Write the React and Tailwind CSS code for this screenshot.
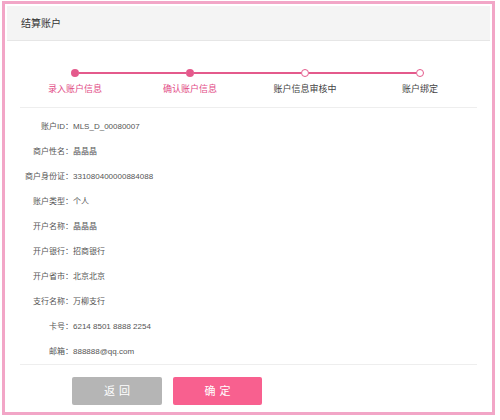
import React from "react";

const steps = [
  { label: "录入账户信息", done: true },
  { label: "确认账户信息", done: true },
  { label: "账户信息审核中", done: false },
  { label: "账户绑定", done: false },
];

const rows = [
  ["账户ID：", "MLS_D_00080007"],
  ["商户性名：", "晶晶晶"],
  ["商户身份证：", "331080400000884088"],
  ["账户类型：", "个人"],
  ["开户名称：", "晶晶晶"],
  ["开户银行：", "招商银行"],
  ["开户省市：", "北京北京"],
  ["支行名称：", "万柳支行"],
  ["卡号：", "6214 8501 8888 2254"],
  ["邮箱：", "888888@qq.com"],
];

function Dot({ done }) {
  return done ? (
    <div className="w-[8px] h-[8px] rounded-full bg-[#e45a8c] shrink-0" />
  ) : (
    <div className="w-[8px] h-[8px] rounded-full bg-white border-[1.5px] border-[#e45a8c] shrink-0" />
  );
}

export default function App() {
  return (
    <div className="w-[500px] h-[420px] bg-white pt-[1px] pl-[2px] font-['Liberation_Sans','Noto_Sans_CJK_SC',sans-serif]">
      <div className="w-[493px] h-[414px] border-[3px] border-[#f2a6c7] p-[2px] flex flex-col">
        <div className="h-[35px] bg-[#f4f4f4] border-b border-[#e6e6e6] flex items-center pl-[14px] text-[10px] text-[#333]">
          结算账户
        </div>

        <div className="pt-[28px] pl-[64px] flex items-center">
          {steps.map((s, i) => (
            <React.Fragment key={i}>
              <Dot done={s.done} />
              {i < steps.length - 1 && <div className="w-[107px] h-[2px] bg-[#e45a8c]" />}
            </React.Fragment>
          ))}
        </div>
        <div className="mt-[6px] ml-[10.5px] grid grid-cols-[115px_115px_115px_115px]">
          {steps.map((s, i) => (
            <div
              key={i}
              className={`text-center text-[9px] leading-[12px] ${i < 2 ? "text-[#e24a85]" : "text-[#444]"}`}
            >
              {s.label}
            </div>
          ))}
        </div>

        <div className="mt-[12px] mx-[13px] h-px bg-[#eeeeee]" />

        <div className="pt-[6px] pl-[13px] flex flex-col">
          {rows.map(([k, v], i) => (
            <div key={i} className="h-[25px] flex items-center text-[8px] text-[#555]">
              <div className="w-[53px] text-right">{k}</div>
              <div>{v}</div>
            </div>
          ))}
        </div>

        <div className="mx-[13px] h-px bg-[#eeeeee]" />

        <div className="mt-[12px] pl-[65px] flex gap-[11px]">
          <button className="w-[90px] h-[28px] rounded-[2px] bg-[#b5b5b5] text-white text-[11px] tracking-[4px] pl-[4px]">
            返回
          </button>
          <button className="w-[89px] h-[28px] rounded-[2px] bg-[#f8608f] text-white text-[11px] tracking-[4px] pl-[4px]">
            确定
          </button>
        </div>
      </div>
    </div>
  );
}
